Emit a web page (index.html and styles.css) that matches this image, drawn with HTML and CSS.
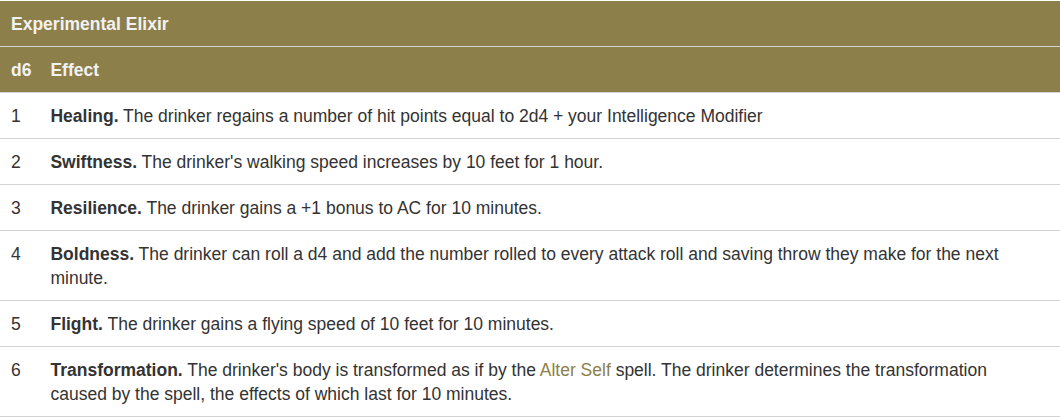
FILE: index.html
```html
<!DOCTYPE html>
<html>
<head>
<meta charset="utf-8">
<link rel="stylesheet" href="styles.css">
</head>
<body>
<table class="elixir">
  <thead>
    <tr class="caption-row"><th colspan="2">Experimental Elixir</th></tr>
    <tr class="cols-row"><th class="num">d6</th><th>Effect</th></tr>
  </thead>
  <tbody>
    <tr><td class="num">1</td><td><strong>Healing.</strong> The drinker regains a number of hit points equal to 2d4 + your Intelligence Modifier</td></tr>
    <tr><td class="num">2</td><td><strong>Swiftness.</strong> The drinker's walking speed increases by 10 feet for 1 hour.</td></tr>
    <tr><td class="num">3</td><td><strong>Resilience.</strong> The drinker gains a +1 bonus to AC for 10 minutes.</td></tr>
    <tr><td class="num">4</td><td><strong>Boldness.</strong> The drinker can roll a d4 and add the number rolled to every attack roll and saving throw they make for the next minute.</td></tr>
    <tr><td class="num">5</td><td><strong>Flight.</strong> The drinker gains a flying speed of 10 feet for 10 minutes.</td></tr>
    <tr><td class="num">6</td><td><strong>Transformation.</strong> The drinker's body is transformed as if by the <a class="spell" href="#">Alter Self</a> spell. The drinker determines the transformation caused by the spell, the effects of which last for 10 minutes.</td></tr>
  </tbody>
</table>
</body>
</html>
```

FILE: styles.css
```css
html, body {
  margin: 0;
  padding: 0;
  background: #fff;
}
body {
  padding-top: 1px;
  font-family: "Liberation Sans", Arial, sans-serif;
  font-size: 17.5px;
  color: #333;
}
.elixir {
  width: 1060px;
  border-collapse: collapse;
  border-spacing: 0;
}
.elixir th,
.elixir td {
  padding: 11px 18px 10px 11px;
  line-height: 24px;
  text-align: left;
  vertical-align: top;
  border-bottom: 1px solid #d4d4d4;
}
.elixir th {
  background: #8d7f4a;
  color: #f2f2f2;
  font-weight: bold;
}
.elixir td.num,
.elixir th.num {
  width: 19px;
  padding-right: 8px;
}
.spell {
  color: #8d7f4a;
  text-decoration: none;
}
```
